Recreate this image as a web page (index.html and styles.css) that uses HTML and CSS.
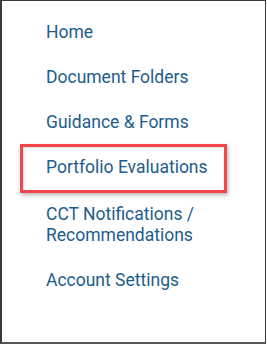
FILE: index.html
```html
<!DOCTYPE html>
<html lang="en">
<head>
  <meta charset="UTF-8" />
  <title>Menu</title>
  <link rel="stylesheet" href="styles.css">
</head>
<body>
  <div class="panel">
    <ul class="menu">
      <li class="menu-item">Home</li>
      <li class="menu-item">Document Folders</li>
      <li class="menu-item">Guidance &amp; Forms</li>
      <li class="menu-item highlighted">Portfolio Evaluations</li>
      <li class="menu-item">CCT Notifications /<br>Recommendations</li>
      <li class="menu-item">Account Settings</li>
    </ul>
  </div>
</body>
</html>
```

FILE: styles.css
```css
body {
  margin: 0;
  background: #fff;
  font-family: Roboto, "Noto Sans", sans-serif;
}

.panel {
  width: 263px;
  height: 341px;
  border: 1px solid #3a3a3a;
  border-left-width: 2px;
  border-bottom: 2px solid #555;
  background: #fff;
}

.menu {
  list-style: none;
  margin: 0;
  padding: 21px 0 0 44px;
}

.menu-item {
  position: relative;
  font-size: 17.5px;
  line-height: 21px;
  color: #1d5c8d;
  margin-bottom: 24px;
}

.highlighted {
  margin-bottom: 26px;
}

.highlighted::after {
  content: "";
  position: absolute;
  left: -26px;
  top: -13px;
  width: 201px;
  height: 43px;
  border: 3px solid #f0464c;
  box-shadow: 1px 2px 4px rgba(0, 0, 0, 0.3), inset 1px 1px 3px rgba(0, 0, 0, 0.15);
}
```
